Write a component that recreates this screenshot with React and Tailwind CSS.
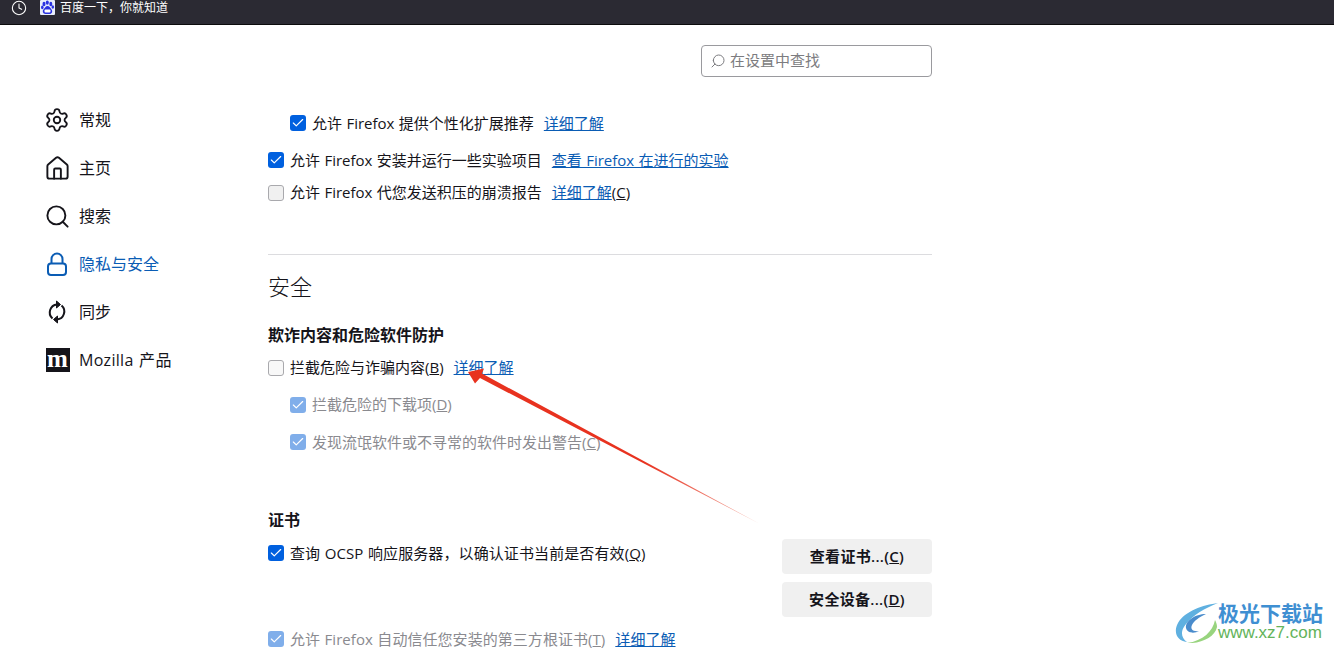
import React from "react";
import { Check, Clock, House, Search, Settings } from "lucide-react";

const navItems = [
  { label: "常规", icon: <Settings size={26} strokeWidth={1.7} className="shrink-0" /> },
  { label: "主页", icon: <House size={27} strokeWidth={1.7} className="shrink-0" /> },
  { label: "搜索", icon: <Search size={27} strokeWidth={1.7} className="shrink-0" /> },
  { label: "隐私与安全", icon: <LockIcon />, active: true },
  { label: "同步", icon: <SyncIcon /> },
  { label: "Mozilla 产品", icon: <MozillaIcon />, latin: true },
];

function LockIcon() {
  return (
    <svg width="24" height="24" viewBox="0 0 24 24" fill="none" stroke="currentColor" strokeWidth="2">
      <rect x="3" y="11.500" width="18" height="11.500" rx="3" />
      <path d="M6.500 11.500V7a5.500 5.500 0 0 1 11 0v4.500" />
    </svg>
  );
}

function SyncIcon() {
  return (
    <svg width="24" height="24" viewBox="0 0 24 24" fill="none" stroke="currentColor" strokeWidth="2">
      <path d="M7.500 18.500A8 8 0 0 1 12 4.500" />
      <path d="M16.500 5.500A8 8 0 0 1 12 19.500" />
      <path d="M11.500 1v7L15.500 4.500z" fill="currentColor" strokeWidth="1" />
      <path d="M12.500 16v7L8.500 19.500z" fill="currentColor" strokeWidth="1" />
    </svg>
  );
}

function MozillaIcon() {
  return (
    <span className="ml-[1px] flex h-6 w-6 shrink-0 items-center justify-center bg-[#15141a] font-['Liberation_Serif',serif] text-[25px] leading-none font-bold text-white">
      <span className="mb-[4px]">m</span>
    </span>
  );
}

function BaiduIcon() {
  return (
    <svg width="15" height="15" viewBox="0 0 15 15" className="shrink-0">
      <rect width="15" height="15" rx="1" fill="#e8eefc" />
      <ellipse cx="4" cy="4" rx="1.500" ry="2.200" fill="#2932e1" />
      <ellipse cx="7.300" cy="2.600" rx="1.500" ry="2.200" fill="#2932e1" />
      <ellipse cx="10.800" cy="4" rx="1.500" ry="2.200" fill="#2932e1" />
      <ellipse cx="12.800" cy="7" rx="1.300" ry="1.800" fill="#2932e1" />
      <ellipse cx="2.300" cy="7.400" rx="1.300" ry="1.800" fill="#2932e1" />
      <path d="M7.500 6C5.500 6 5 8 3.500 9.500S3 14 5.500 14h4c2.500 0 3.500-2.500 2-4.500S9.500 6 7.500 6z" fill="#2932e1" />
      <rect x="4.500" y="9.500" width="6" height="3" rx="1" fill="#fff" />
    </svg>
  );
}

function Box({ checked, disabled, pale }) {
  if (!checked) {
    return <span className={`h-4 w-4 shrink-0 rounded-[3px] border border-[#a9a9ad] ${pale ? "bg-[#f8f8f8]" : "bg-[#f0f0f0]"}`} />;
  }
  return (
    <span className={`flex h-4 w-4 shrink-0 items-center justify-center rounded-[3px] text-white ${disabled ? "bg-[#80aeea]" : "bg-[#0060df]"}`}>
      <Check size={14} strokeWidth={2} />
    </span>
  );
}

// lift: the text sits a pixel higher than the box on some rows
function Row({ checked, disabled, pale, lift, className = "", children }) {
  return (
    <div className={`flex h-6 items-center gap-[6px] ${className}`}>
      <Box checked={checked} disabled={disabled} pale={pale} />
      <span className={`whitespace-nowrap [word-spacing:0.5px] ${lift ? "mb-[2px]" : ""} ${disabled ? "text-[#8a8a8f]" : ""}`}>{children}</span>
    </div>
  );
}

function More({ children }) {
  return <a className="ml-[10px] text-[#0a5cb4] underline">{children}</a>;
}

export default function App() {
  return (
    <div className="relative h-[651px] overflow-hidden bg-white font-['Open_Sans','Noto_Sans_CJK_SC',sans-serif] text-[15px] text-[#15141a]">
      <div className="flex h-[25px] items-start gap-[13px] border-b border-[#0c0c0d] bg-[#2b2a33] pl-[11px] text-[12px] leading-[15px] text-white">
        <Clock size={16} strokeWidth={1.6} className="shrink-0" />
        <div className="flex items-center gap-[5px]">
          <BaiduIcon />
          <span>百度一下，你就知道</span>
        </div>
      </div>

      <div className="flex">
        <nav className="w-[268px] shrink-0 pt-[71px] pl-[45px] text-[16px]">
          {navItems.map((item) => (
            <div key={item.label} className={`flex h-12 items-center gap-[10px] ${item.active ? "text-[#0a5cb4]" : ""}`}>
              <span className="flex w-6 justify-center">{item.icon}</span>
              <span className={item.latin ? "tracking-[0.3px] [word-spacing:1px]" : ""}>{item.label}</span>
            </div>
          ))}
        </nav>

        <main className="w-[664px] shrink-0">
          <div className="mt-5 flex justify-end">
            <div className="flex h-[32px] w-[231px] items-center gap-[4px] rounded border border-[#9a9a9e] pl-2 text-[#7c7c80]">
              <Search size={16} strokeWidth={1.5} className="shrink-0 -scale-x-100" />
              <span className="mb-[2px]">在设置中查找</span>
            </div>
          </div>

          <Row checked className="mt-[34px] ml-[22px]">
            允许 Firefox 提供个性化扩展推荐<More>详细了解</More>
          </Row>
          <Row checked className="mt-[13px]">
            允许 Firefox 安装并运行一些实验项目<More>查看 Firefox 在进行的实验</More>
          </Row>
          <Row lift className="mt-[9px]">
            允许 Firefox 代您发送积压的崩溃报告<More>详细了解</More>(<u>C</u>)
          </Row>

          <hr className="mt-[49px] border-[#dcdcdf]" />

          <h1 className="mt-4 h-8 text-[22px] leading-[30px] font-light">安全</h1>
          <h2 className="mt-5 h-6 text-[16px] leading-6 font-bold">欺诈内容和危险软件防护</h2>
          <Row pale lift className="mt-[9px]">
            拦截危险与诈骗内容(<u>B</u>)<More>详细了解</More>
          </Row>
          <Row checked disabled lift className="mt-[13px] ml-[22px]">
            拦截危险的下载项(<u>D</u>)
          </Row>
          <Row checked disabled className="mt-[13px] ml-[22px]">
            发现流氓软件或不寻常的软件时发出警告(<u>C</u>)
          </Row>

          <h2 className="mt-[54px] h-6 text-[16px] leading-6 font-bold">证书</h2>
          <div className="mt-[7px] flex justify-between">
            <Row checked className="mt-[2px] tracking-[0.1px]">
              查询 OCSP 响应服务器，以确认证书当前是否有效(<u>Q</u>)
            </Row>
            <div className="flex w-[150px] flex-col gap-2 font-semibold tracking-[0.3px]">
              <button className="h-[35px] rounded bg-[#f0f0f0]">查看证书...(<u>C</u>)</button>
              <button className="h-[35px] rounded bg-[#f0f0f0]">安全设备...(<u>D</u>)</button>
            </div>
          </div>
          <Row checked disabled className="mt-[10px] tracking-[0.05px]">
            允许 Firefox 自动信任您安装的第三方根证书(<u>T</u>)<More>详细了解</More>
          </Row>
        </main>
      </div>

      {/* red annotation arrow */}
      <svg className="pointer-events-none absolute top-[360px] left-[460px]" width="310" height="170" viewBox="460 360 310 170">
        <defs>
          <linearGradient id="tail" x1="468" y1="372" x2="760" y2="524" gradientUnits="userSpaceOnUse">
            <stop offset="0" stopColor="#e8321f" />
            <stop offset="0.6" stopColor="#e8321f" />
            <stop offset="1" stopColor="#f4b5aa" />
          </linearGradient>
        </defs>
        <path d="M468 372L484 368.500L482 373.500L760 524L480 378L475 383.500z" fill="url(#tail)" />
      </svg>

      {/* watermark */}
      <div className="absolute right-[11px] bottom-[9px] flex items-end">
        <svg width="44" height="41" viewBox="0 0 44 41" className="mb-[-1px] shrink-0">
          <path d="M44 1C29 3 11 9 4 21C-1 30 3 39 13 40C7 36 6 29 12 22C19 13 31 6 44 1z" fill="#5fb0e0" />
          <path d="M32 12C21 12 11 19 12 26C13 31 20 32 25 29C19 30 16 27 18 23C20 19 25 15 32 12z" fill="#4a8ccc" />
          <path d="M41 18C39 29 29 39 13 41C27 42 41 35 43 25C43 22 42 20 41 18z" fill="#98d47e" />
        </svg>
        <div className="flex flex-col">
          <span className="font-['Noto_Sans_CJK_SC',sans-serif] text-[21px] leading-[21px] font-bold text-[#3f8fd2]">极光下载站</span>
          <span className="mt-[1px] font-['Liberation_Sans',sans-serif] text-[17px] leading-[18px] text-[#63b35a]">www.xz7.com</span>
        </div>
      </div>
    </div>
  );
}
